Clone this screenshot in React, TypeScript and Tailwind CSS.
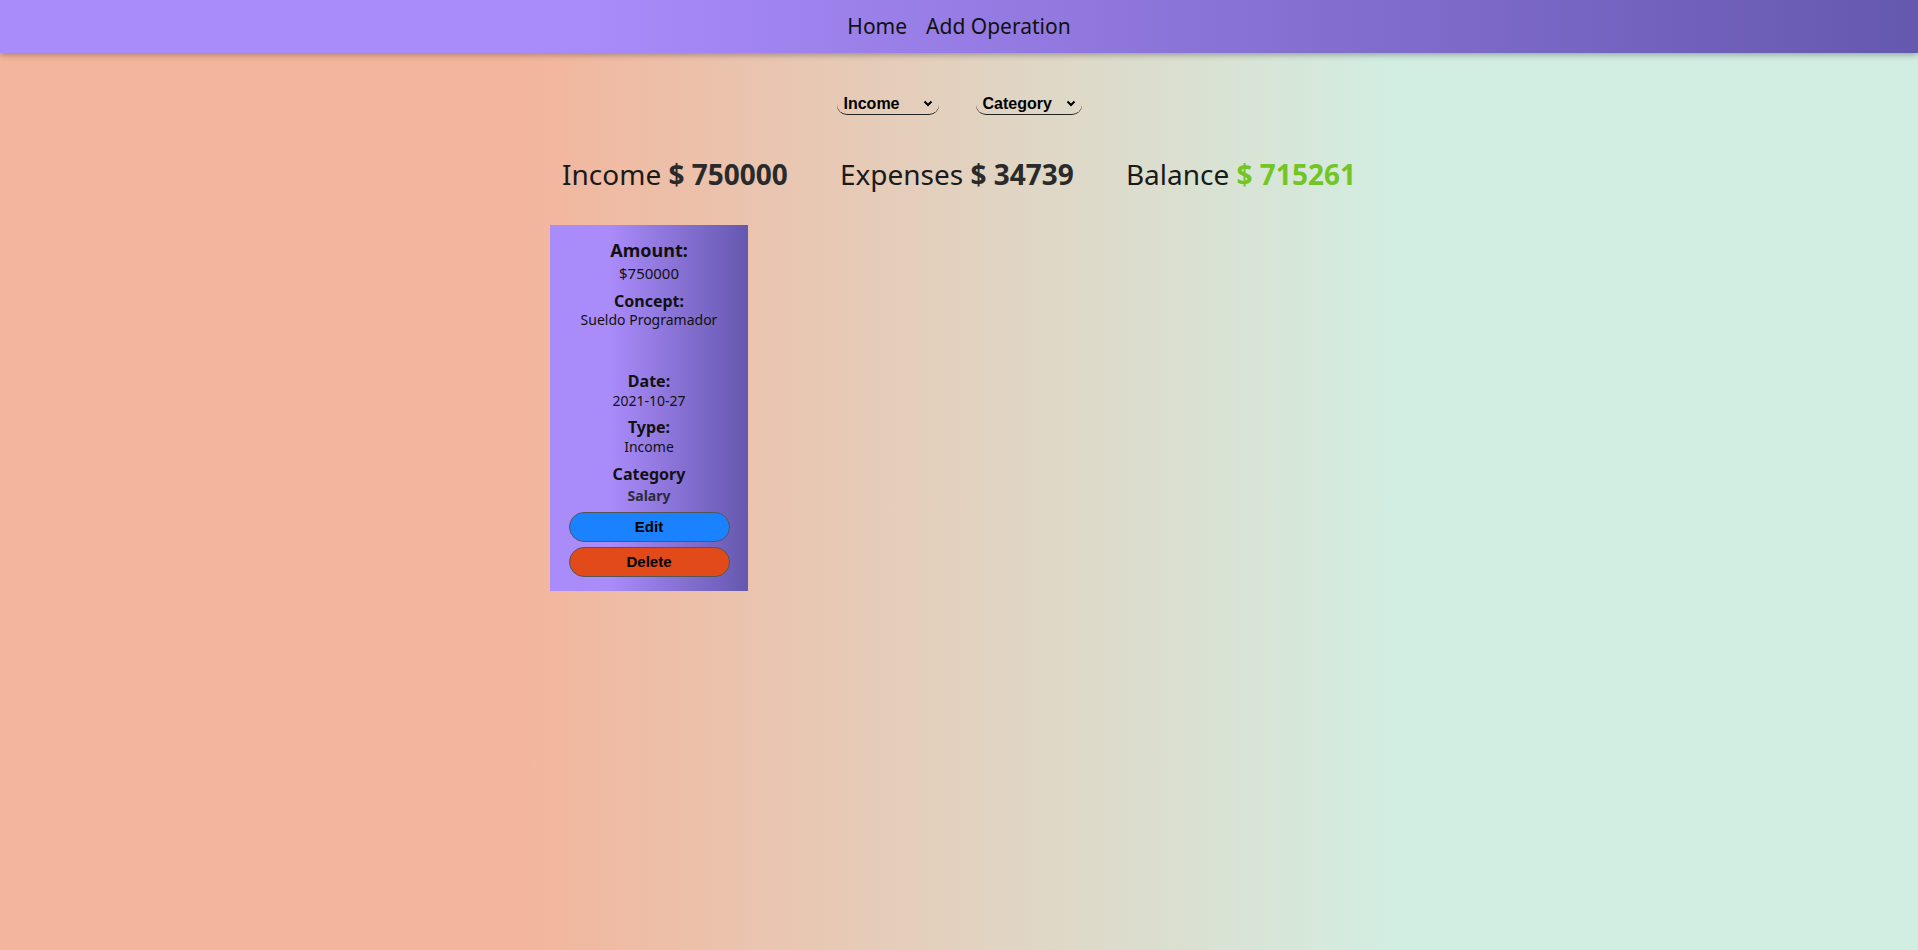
import React from 'react';

interface Operation {
  amount: number;
  concept: string;
  date: string;
  type: string;
  category: string;
}

const operations: Operation[] = [
  { amount: 750000, concept: 'Sueldo Programador', date: '2021-10-27', type: 'Income', category: 'Salary' },
];

const totals = { income: 750000, expenses: 34739 };

const Header = () => (
  <header className="h-[53px] flex items-center justify-center gap-[19px] bg-[linear-gradient(to_right,#aa8bfa_30%,#6558af)] shadow-[0_2px_6px_rgba(0,0,0,0.3)] text-[21px] text-[#111]">
    <a href="#" className="hover:underline">Home</a>
    <a href="#" className="hover:underline">Add Operation</a>
  </header>
);

const Chevron = () => (
  <svg width="10" height="7" viewBox="0 0 10 7" fill="none">
    <path d="M1.5 1.5 L5 5 L8.5 1.5" stroke="#000" strokeWidth="2" />
  </svg>
);

const Filters = () => (
  <div className="flex justify-center gap-[37px] pt-[40px] font-['Liberation_Sans',Arial,sans-serif]">
    <div className="w-[102px] h-[22px] flex items-center justify-between pl-[7px] pr-[6px] border-b border-[#222] rounded-b-[10px] font-bold text-[16px] text-black">
      <span>Income</span>
      <Chevron />
    </div>
    <div className="w-[106px] h-[22px] flex items-center justify-between pl-[7px] pr-[6px] border-b border-[#222] rounded-b-[10px] font-bold text-[16px] text-black">
      <span>Category</span>
      <Chevron />
    </div>
  </div>
);

const Totals = () => {
  const balance = totals.income - totals.expenses;
  return (
    <div className="flex justify-center gap-[52px] mt-[45px] text-[28px] text-[#1a1a1a] leading-none">
      <div>Income <b className="text-[#2a2a2a]">$ {totals.income}</b></div>
      <div>Expenses <b className="text-[#2a2a2a]">$ {totals.expenses}</b></div>
      <div>Balance <b className="text-[#72c525]">$ {balance}</b></div>
    </div>
  );
};

const Card = ({ op }: { op: Operation }) => (
  <div className="w-[198px] flex flex-col items-center pt-[14px] pb-[14px] bg-[linear-gradient(to_right,#aa8bfa_30%,#6558af)] text-[#111] leading-tight">
    <p className="font-bold text-[18px]">Amount:</p>
    <p className="text-[15px] mt-[2px]">${op.amount}</p>
    <p className="font-bold text-[16px] mt-[9px]">Concept:</p>
    <p className="text-[14px]">{op.concept}</p>
    <p className="font-bold text-[16px] mt-[42px]">Date:</p>
    <p className="text-[14px] mt-[1px]">{op.date}</p>
    <p className="font-bold text-[16px] mt-[8px]">Type:</p>
    <p className="text-[14px] mt-[1px]">{op.type}</p>
    <p className="font-bold text-[16px] mt-[8px]">Category</p>
    <p className="font-bold text-[14px] text-[#2b2b3a] mt-[3px]">{op.category}</p>
    <div className="flex flex-col gap-[5px] mt-[8px] font-['Liberation_Sans',Arial,sans-serif]">
      <button className="w-[161px] h-[30px] rounded-full border border-[#555] bg-[#1a82ff] font-bold text-[15px] text-black">Edit</button>
      <button className="w-[161px] h-[30px] rounded-full border border-[#555] bg-[#e24a1a] font-bold text-[15px] text-black">Delete</button>
    </div>
  </div>
);

export default function App() {
  return (
    <div className="min-h-[950px] font-['Noto_Sans',sans-serif] bg-[linear-gradient(to_right,#f3b59c_27%,#d2eee2_73%)]">
      <Header />
      <Filters />
      <Totals />
      <div className="flex gap-4 mt-[37px] pl-[550px]">
        {operations.map((op, i) => (
          <Card key={i} op={op} />
        ))}
      </div>
    </div>
  );
}
